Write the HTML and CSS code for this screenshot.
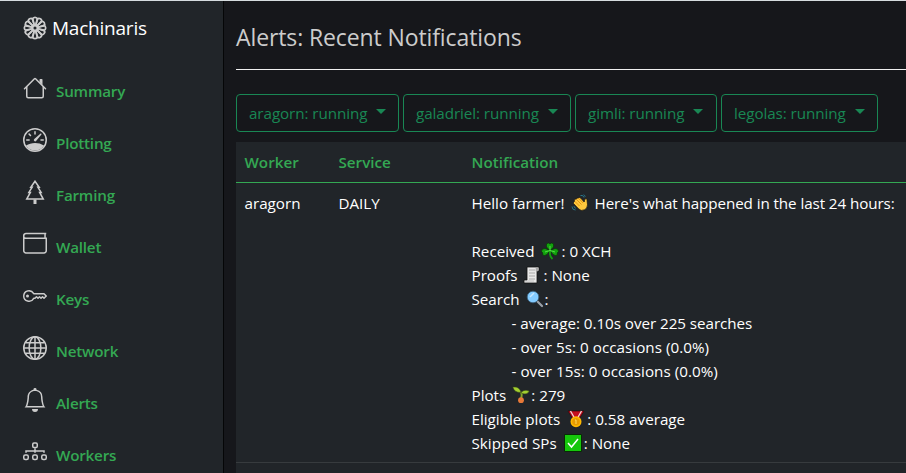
FILE: index.html
```html
<!DOCTYPE html>
<html lang="en">
<head>
<meta charset="utf-8">
<title>Machinaris</title>
<link rel="stylesheet" href="styles.css">
</head>
<body>
<div class="app">
  <nav class="sidebar">
    <a class="brand">
      <svg class="icon" viewBox="0 0 16 16"><g class="line bold"><circle cx="8" cy="8" r="1.6"/><g id="p"><path id="petal" d="M7.65 6.4 6.3 2.2A1.75 1.75 0 0 1 9.7 2.2L8.35 6.4"/><use href="#petal" transform="rotate(30 8 8)"/><use href="#petal" transform="rotate(60 8 8)"/></g><use href="#p" transform="rotate(90 8 8)"/><use href="#p" transform="rotate(180 8 8)"/><use href="#p" transform="rotate(270 8 8)"/></g></svg>
      <span class="brand-name">Machinaris</span>
    </a>
    <ul class="menu">
      <li><svg class="icon" viewBox="0 0 16 16"><path fill-rule="evenodd" d="M2 13.5V7h1v6.5a.5.5 0 0 0 .5.5h9a.5.5 0 0 0 .5-.5V7h1v6.5a1.5 1.5 0 0 1-1.5 1.5h-9A1.5 1.5 0 0 1 2 13.5zm11-11V6l-2-2V2.5a.5.5 0 0 1 .5-.5h1a.5.5 0 0 1 .5.5z"/><path d="M7.293 1.5a1 1 0 0 1 1.414 0l6.647 6.646a.5.5 0 0 1-.708.708L8 2.207 1.354 8.854a.5.5 0 1 1-.708-.708L7.293 1.5z"/></svg><span>Summary</span></li>
      <li><svg class="icon" viewBox="0 0 16 16"><path d="M8 2a.5.5 0 0 1 .5.5V4a.5.5 0 0 1-1 0V2.5A.5.5 0 0 1 8 2zM3.732 3.732a.5.5 0 0 1 .707 0l.915.914a.5.5 0 1 1-.708.708l-.914-.915a.5.5 0 0 1 0-.707zM2 8a.5.5 0 0 1 .5-.5h1.586a.5.5 0 0 1 0 1H2.5A.5.5 0 0 1 2 8zm9.5 0a.5.5 0 0 1 .5-.5h1.5a.5.5 0 0 1 0 1H12a.5.5 0 0 1-.5-.5zm.754-4.246a.389.389 0 0 0-.527-.02L7.547 7.31A.91.91 0 1 0 8.85 8.569l3.434-4.297a.389.389 0 0 0-.029-.518z"/><path d="M8 10c-2.200 0-4.240.580-6 1.606A7 7 0 0 0 14 11.606A11.900 11.900 0 0 0 8 10z"/><circle class="line" cx="8" cy="8" r="7.500"/></svg><span>Plotting</span></li>
      <li><svg class="icon" viewBox="0 0 16 16"><path class="line" d="M8 .8 5.2 4.8h.9L3.9 8.3h1L2.5 12.7h11L11.100 8.300h1L9.900 4.800h.9z"/><path d="M7 13h2v3H7z"/></svg><span>Farming</span></li>
      <li><svg class="icon" viewBox="0 0 16 16"><path class="line" d="M15.500 1H2A1.500 1.500 0 0 0 .5 2.500v10A1.500 1.500 0 0 0 2 14h12a1.500 1.500 0 0 0 1.500-1.500V4.200H2A1.500 1.500 0 0 1 2 1M14.700 1v3"/></svg><span>Wallet</span></li>
      <li><svg class="icon" viewBox="0 0 16 16"><path d="M0 8a4 4 0 0 1 7.465-2H14a.5.5 0 0 1 .354.146l1.500 1.500a.5.5 0 0 1 0 .708l-1.500 1.500a.5.5 0 0 1-.708 0L13 9.207l-.646.647a.5.5 0 0 1-.708 0L11 9.207l-.646.647a.5.5 0 0 1-.708 0L9 9.207l-.646.647A.5.5 0 0 1 8 10h-.535A4 4 0 0 1 0 8zm4-3a3 3 0 1 0 2.712 4.285A.5.5 0 0 1 7.163 9h.63l.853-.854a.5.5 0 0 1 .708 0l.646.647.646-.647a.5.5 0 0 1 .708 0l.646.647.646-.647a.5.5 0 0 1 .708 0l.646.647.793-.793-1-1h-6.630a.5.5 0 0 1-.451-.285A3 3 0 0 0 4 5z"/><circle cx="3" cy="8" r="1"/></svg><span>Keys</span></li>
      <li><svg class="icon" viewBox="0 0 16 16"><g class="line"><circle cx="8" cy="8" r="7.500"/><ellipse cx="8" cy="8" rx="3.900" ry="7.500"/><path d="M8 .5v15M.5 8h15M1.700 4.500h12.600M1.700 11.500h12.600"/></g></svg><span>Network</span></li>
      <li><svg class="icon" viewBox="0 0 16 16"><path d="M8 16a2 2 0 0 0 2-2H6a2 2 0 0 0 2 2zM8 1.918l-.797.161A4.002 4.002 0 0 0 4 6c0 .628-.134 2.197-.459 3.742-.16.767-.376 1.566-.663 2.258h10.244c-.287-.692-.502-1.490-.663-2.258C12.134 8.197 12 6.628 12 6a4.002 4.002 0 0 0-3.203-3.920L8 1.917zM14.220 12c.223.447.481.801.78 1H1c.299-.199.557-.553.780-1C2.680 10.200 3 6.880 3 6c0-2.420 1.720-4.440 4.005-4.901a1 1 0 1 1 1.990 0A5.002 5.002 0 0 1 13 6c0 .880.320 4.200 1.220 6z"/></svg><span>Alerts</span></li>
      <li><svg class="icon" viewBox="0 0 16 16"><g class="line"><rect x="6.500" y="2" width="3" height="3" rx=".8"/><rect x=".5" y="10" width="3" height="3" rx="1"/><rect x="6.500" y="10" width="3" height="3" rx="1"/><rect x="12.500" y="10" width="3" height="3" rx="1"/><path d="M8 5.500v2M2 8.500V7.300h12v1.200M8 7.500v1"/></g></svg><span>Workers</span></li>
    </ul>
  </nav>
  <main class="content">
    <h1 class="title">Alerts: Recent Notifications</h1>
    <div class="buttons">
      <button class="btn b1"><span>aragorn: running</span></button>
      <button class="btn b2"><span>galadriel: running</span></button>
      <button class="btn b3"><span>gimli: running</span></button>
      <button class="btn b4"><span>legolas: running</span></button>
    </div>
    <div class="table">
      <div class="row head"><div><span>Worker</span></div><div><span>Service</span></div><div><span>Notification</span></div></div>
      <div class="row">
        <div><span>aragorn</span></div>
        <div><span>DAILY</span></div>
        <div class="message">
          <p><span>Hello farmer!</span><svg class="emoji wave" viewBox="0 0 18 18"><path d="M2.500 9.500Q2 8 3.500 7.500L3.300 6q.7-1.500 2-.8.300-1.700 2-1.200 1-1.200 2.300 0l3.600 4 .3-2q.3-1.500 1.800-1.200 1 .3.800 2l.4 4q0 3.500-3 5-3.500 1.700-6-1z" fill="#ffc83d" stroke="#111" stroke-width=".7"/><path d="m4 7.500 4.500 4.500M5.500 5.500l5 5M7.500 4.200l4.700 4.800" stroke="#d67d00" stroke-width=".7"/><path d="M9.500 1.500q2.500-1 3.500 2M12.500.8q1.500.4 1.700 2M1 12.500q0 3.500 3.500 3.500M3 12.200q.2 1.800 1.800 2" fill="none" stroke="#28768a" stroke-width="1"/></svg><span class="hello">Here's what happened in the last 24 hours:</span></p>
          <p></p>
          <p><span>Received</span><svg class="emoji" viewBox="0 0 18 18"><g fill="#13a10e" stroke="#062b05" stroke-width=".6"><path d="M9 8.500 5.500 5Q4.500 1 7.500 1L9 2l1.500-1q3 0 2 4z"/><path d="M9 8.500 6 12.500Q3 14.500 1.500 12.500L1.800 11 .5 9.500Q.3 6.500 4 6.500z"/><path d="m9 8.500 3 4q3 2 4.500 0l-.3-1.500 1.300-1.500q.2-3-3.500-3z"/></g><path d="M9 8.500v3.500q0 3 2.500 5" fill="none" stroke="#13a10e" stroke-width="1.800"/><path d="M9 4v5M4 10l5-1.500 5 1.500" fill="none" stroke="#5be34c" stroke-width=".9"/></svg><span>: 0 XCH</span></p>
          <p><span>Proofs</span><svg class="emoji scroll" viewBox="0 0 18 18"><path d="M4 1h12v4h-2v12H1v-3h3z" fill="#e8e8e8" stroke="#111" stroke-width=".8"/><path d="M6 4h6M6 7h6M6 10h6M6 13h6" stroke="#aaa"/><path d="M13 2v3h2V2zM2 15h9" fill="#aaa" stroke="#aaa" stroke-width=".6"/></svg><span>: None</span></p>
          <p><span>Search</span><svg class="emoji search" viewBox="0 0 18 18"><path d="m10.500 10.500 5.500 5.500" stroke="#9aa0a8" stroke-width="2.300" stroke-linecap="round"/><circle cx="7" cy="7" r="5.800" fill="#83cbff" stroke="#3c617b" stroke-width=".8"/><path d="m4 7 4-4" stroke="#c7e8ff" stroke-width="1.500"/></svg><span>:</span></p>
          <p class="sub"><span class="avg">- average: 0.10s over 225 searches</span></p>
          <p class="sub"><span class="over">- over 5s: 0 occasions (0.0%)</span></p>
          <p class="sub"><span class="over">- over 15s: 0 occasions (0.0%)</span></p>
          <p><span>Plots</span><svg class="emoji plant" viewBox="0 0 18 18"><path d="M9 13q1.500-4 0-7" fill="none" stroke="#86a82c" stroke-width="1.800"/><path d="M9 6.500Q2 6.500 .8 1q7-.8 8.200 5.500zm0 .5q2-4 8.300-2-2 4.500-8.300 2z" fill="#a4cf30" stroke="#334514" stroke-width=".5"/><circle cx="9" cy="14.200" r="2.900" fill="#e87938"/></svg><span>: 279</span></p>
          <p><span>Eligible plots</span><svg class="emoji" viewBox="0 0 18 18"><path d="M1 1h16l-5 8H6z" fill="#c50f1f" stroke="#260505" stroke-width=".6"/><path d="m3.500 1 4 7M14.500 1l-4 7" stroke="#f4d7da" stroke-width="1.300"/><circle cx="9" cy="11.700" r="5.500" fill="#ffb900"/><circle cx="9" cy="11.700" r="3.800" fill="#e89a00"/><path d="M8 10h1v4" fill="none" stroke="#ffda59"/></svg><span>: 0.58 average</span></p>
          <p><span>Skipped SPs</span><svg class="emoji" viewBox="0 0 18 18"><path d="M.5.5h17v17H.5z" fill="#16c60c" stroke="#082b05"/><path d="m4 9 3.500 4L14 5" fill="none" stroke="#fff" stroke-width="1.500"/></svg><span>: None</span></p>
        </div>
      </div>
    </div>
  </main>
</div>
</body>
</html>
```
FILE: styles.css
```css
* { box-sizing: border-box; }
body { margin: 0; overflow: hidden; background: #16171b; color: #fff; font: 15.2px/24px "Open Sans", "Noto Sans", sans-serif; }
.app { height: 473px; border-top: 1px solid #d6dcdf; display: flex; overflow: hidden; }
.sidebar { width: 224px; flex: none; background: #212529; border-right: 1px solid #050607; padding: 15px 22px 0 23px; }
.icon { width: 24px; height: 24px; flex: none; fill: #ccc; }
.line { fill: none; stroke: #ccc; stroke-width: 1; }
.bold { stroke-width: 1.15; }
.brand { display: flex; gap: 5px; height: 24px; font-size: 19px; }
.brand-name { letter-spacing: -.22px; }
.menu { list-style: none; margin: 36px 0 0; padding: 0; }
.menu li { display: flex; height: 52px; gap: 9px; color: #34a853; font-weight: 600; letter-spacing: -.2px; }
.menu span { padding-top: 3px; }
.content { flex: 1; min-width: 0; padding-left: 12px; }
.title { font-size: 23px; line-height: 32px; font-weight: 400; letter-spacing: -.11px; color: #ccc; margin: 0 0 24px; padding: 20px 0 16px; border-bottom: 1px solid #f0f0f0; }
.buttons { display: flex; gap: 4px; height: 38px; margin-bottom: 10px; }
.btn { display: flex; align-items: center; gap: 9px; padding: 0 12px; background: none; border: 1px solid #198754; border-radius: 4px; color: #198754; font: inherit; letter-spacing: -.07px; white-space: nowrap; }
.btn::after { content: ""; border: 5px solid transparent; border-top-color: #198754; border-bottom: 0; margin-top: -3px; }
.b1 { width: 163px; }
.b2 { width: 168px; }
.b3 { width: 142px; }
.b4 { width: 157px; }
.table { background: #212529; white-space: nowrap; height: 340px; }
.row { display: grid; grid-template-columns: 94px 133px 1fr; padding: 8px 0 7px 8.5px; border-bottom: 1px solid #373b3e; }
.head { padding-bottom: 8px; border-bottom-color: #34a853; color: #34a853; font-weight: 600; }
.message p { margin: 0; height: 24px; display: flex; align-items: center; }
.message .sub { padding-left: 40px; }
.emoji { width: 18px; height: 18px; margin: 0 2px 0 7px; }
.wave { margin: 0 6px 0 6px; }
.scroll { margin: 0 2px 0 6px; }
.search { margin: 0 1px 0 6px; }
.plant { margin: 0 1px 0 6px; }
.hello { letter-spacing: -.08px; }
.avg { letter-spacing: -.04px; }
.over { letter-spacing: .04px; }
```
